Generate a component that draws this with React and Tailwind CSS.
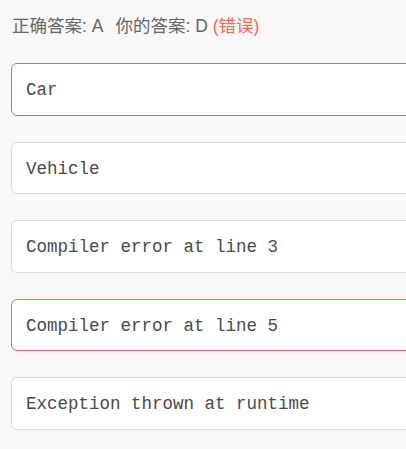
export default function App() {
  const options = [
    { text: 'Car', state: 'correct' },
    { text: 'Vehicle', state: 'none' },
    { text: 'Compiler error at line 3', state: 'none' },
    { text: 'Compiler error at line 5', state: 'wrong' },
    { text: 'Exception thrown at runtime', state: 'none' },
  ]

  return (
    <div className="w-[406px] h-[449px] overflow-hidden bg-[#f8f8f8] pl-[11px] pt-[12px]">
      {/* answer line */}
      <div className="text-[17.5px] leading-[28px] text-[#666] pl-px" style={{ fontFamily: '"Liberation Sans", "Noto Sans CJK SC", sans-serif' }}>
        <span className="mr-[12px]">正确答案: A</span>
        <span>你的答案: D </span>
        <span className="text-[#ff6a4d]">(错误)</span>
      </div>

      <div className="mt-[23px] w-[420px] flex flex-col gap-[26px]">
        {options.map((o) => (
          <div
            key={o.text}
            className={`h-[52.5px] flex items-center pl-[14px] pt-[2px] bg-white rounded-[6px] border ${
              o.state === 'correct'
                ? 'border-[#1abc9c]'
                : o.state === 'wrong'
                ? 'border-[#fa6a50]'
                : 'border-[#dcdcdc]'
            }`}
          >
            <span className="text-[17.5px] text-[#4a4a4a]" style={{ fontFamily: '"Liberation Mono", "Courier New", monospace' }}>
              {o.text}
            </span>
          </div>
        ))}
      </div>
    </div>
  )
}
